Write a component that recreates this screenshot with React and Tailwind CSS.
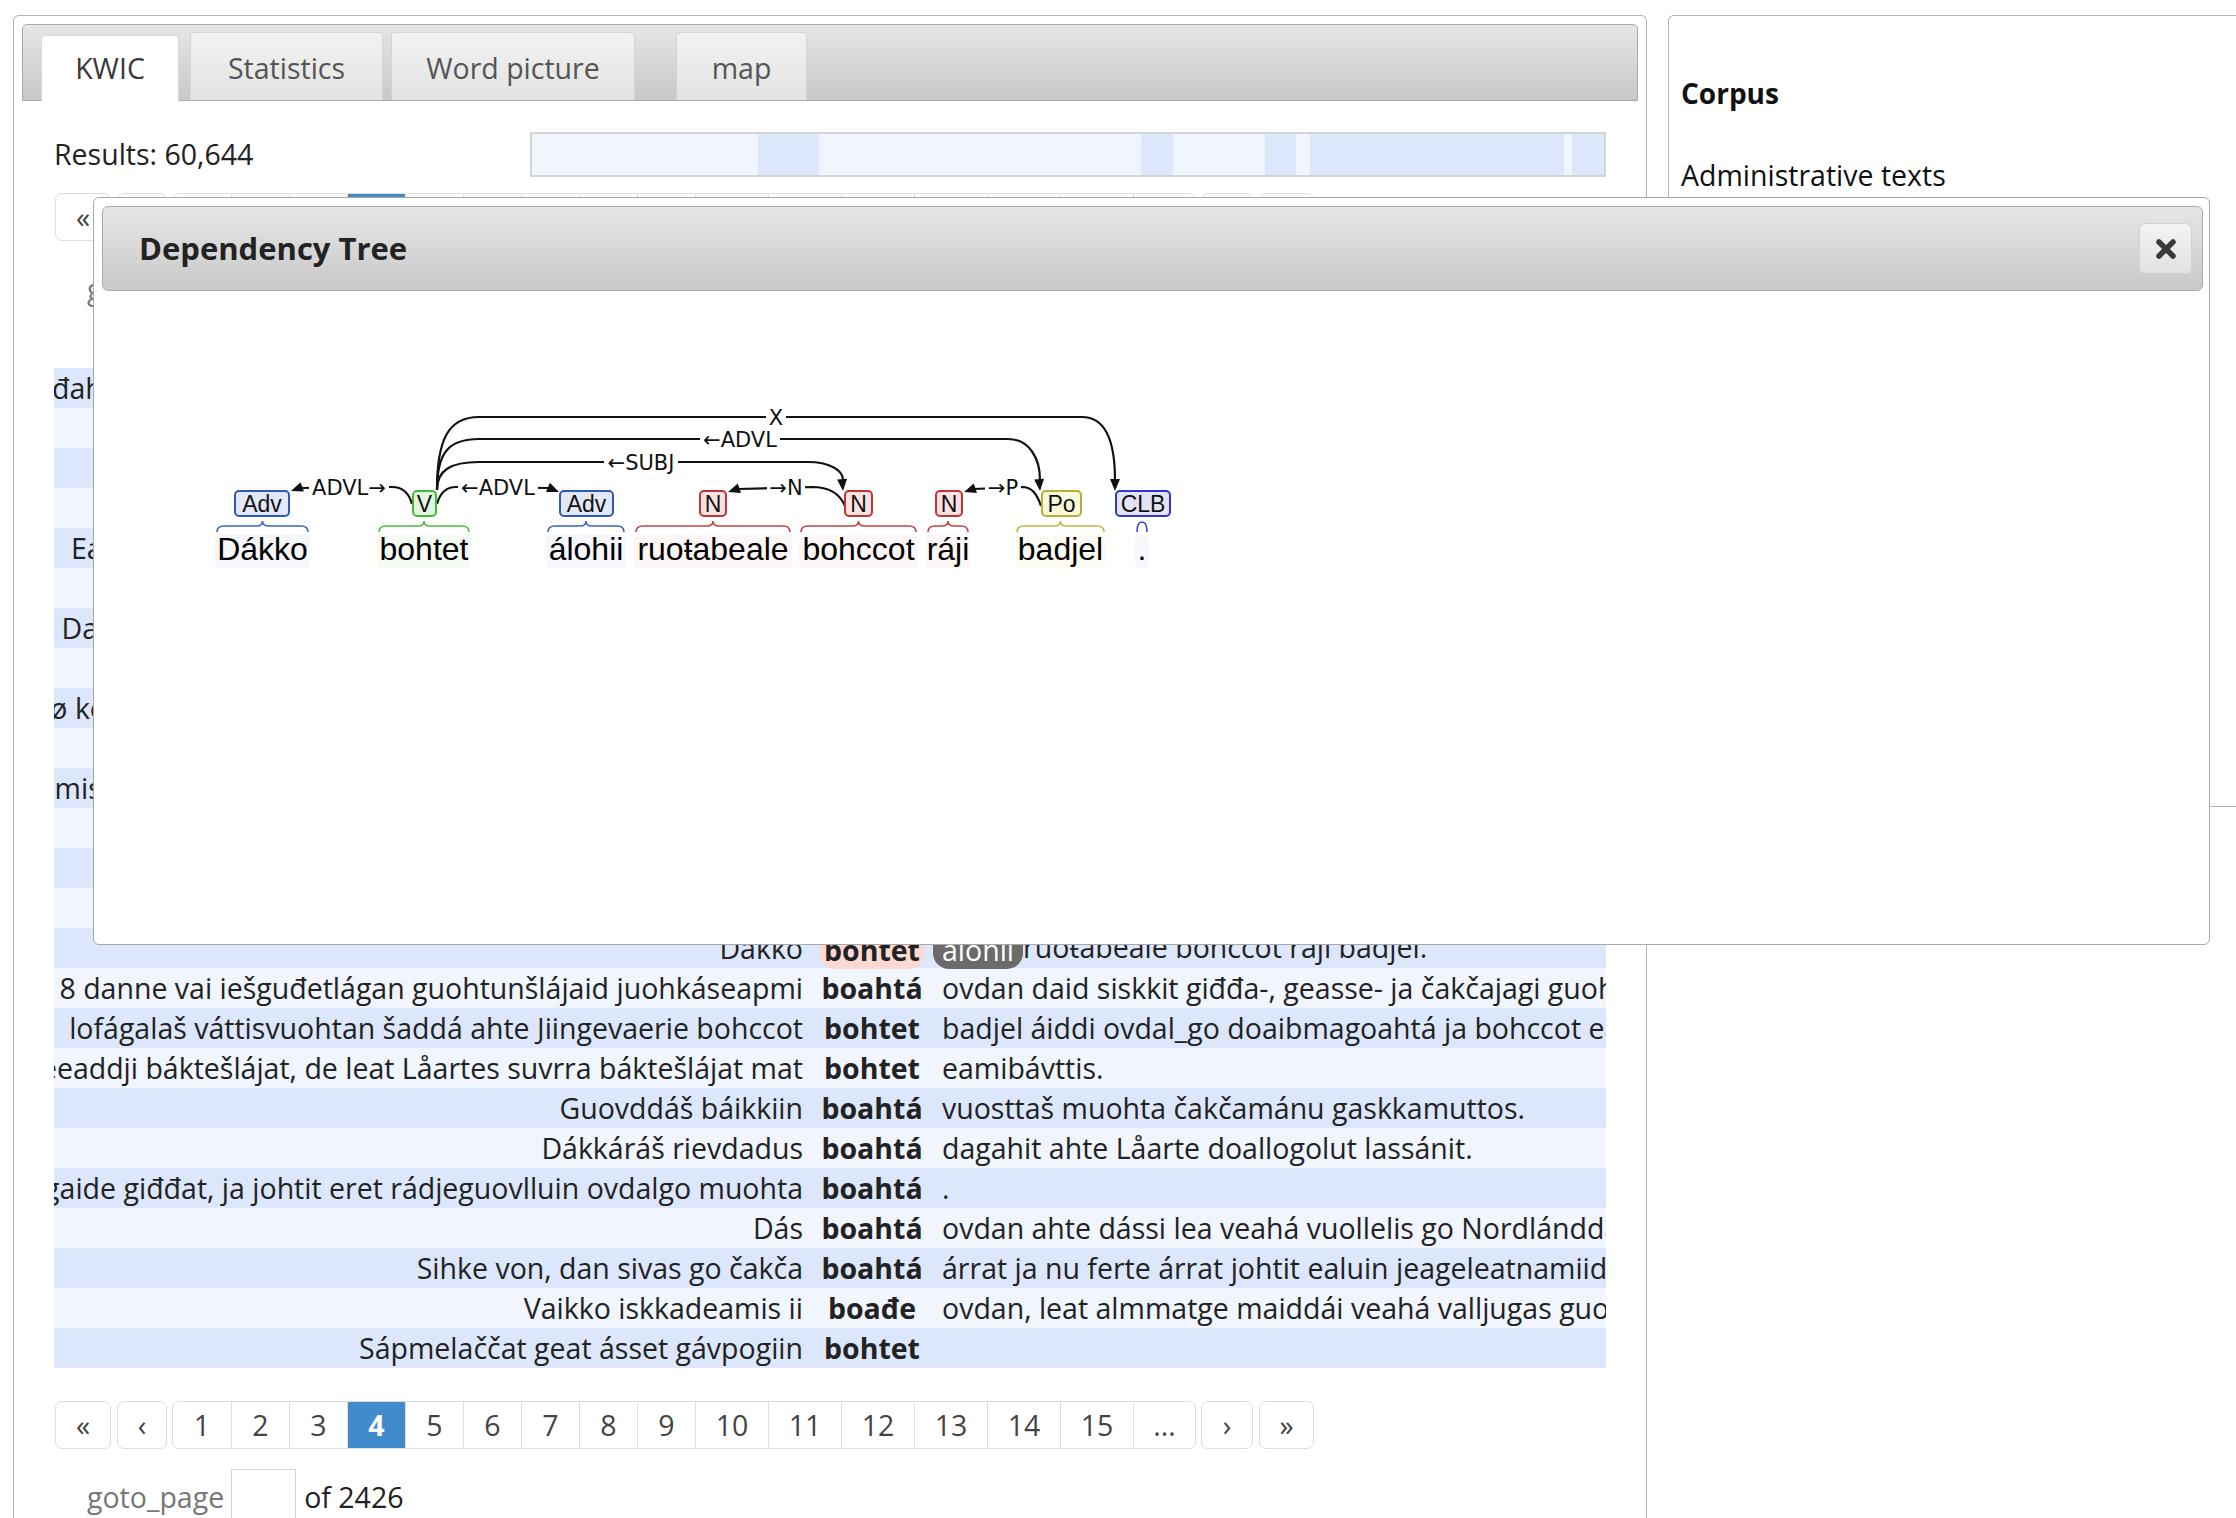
import React from "react";

const rows = [
  { left: "đahkan lea dat ahte eanaš bohccuid orrot várreguovlluin", match: "bohtet", right: "dalvet vuotnaguovlluide ja orrot doppe gitta giđđii." },
  { left: "Go", match: "boahtá", right: "giđđa, de bohccot johtet geassejohtolagaide." },
  { left: "Dalle", match: "bohtet", right: "eallit fas ruoktot." },
  { left: "Muhto čakčat", match: "boahtá", right: "muohta árrat ja guohtun šaddá heittot." },
  { left: "Eanaš bohccot leat dalvet guohtumiin dain guovlluin go", match: "bohtet", right: "ruoktot mearragáddái." },
  { left: "Jus", match: "boahtá", right: "bivvalis dálki, de goiká jiekŋa." },
  { left: "Dat mearkkaša ahte buot bohccot mat leat dan guovllus", match: "bohtet", right: "čoggojuvvot ovttas." },
  { left: "Maŋŋil", match: "boahtá", right: "rátkin." },
  { left: "ø kommuna lea stuorra boazodoallosuohkan, doppe leat", match: "bohtet", right: "eanemus bohccot." },
  { left: "Dasto", match: "boahtá", right: "merkema áigi." },
  { left: "mis leat dieđut das man ollu bohccot dávjá leat dain mat", match: "bohtet", right: "eará guovlluin." },
  { left: "Go geassi", match: "boahtá", right: "de bohccot vádjolit várriide." },
  { left: "Ođđa", match: "bohtet", right: "láhkaásahusat." },
  { left: "Dalle", match: "boahtá", right: "čakčageassi." },
  { left: "Dákko", match: "bohtet", right: null, special: true },
  { left: "2018 danne vai iešguđetlágan guohtunšlájaid juohkáseapmi", match: "boahtá", right: "ovdan daid siskkit giđđa-, geasse- ja čakčajagi guohtumiin." },
  { left: "lofágalaš váttisvuohtan šaddá ahte Jiingevaerie bohccot", match: "bohtet", right: "badjel áiddi ovdal_go doaibmagoahtá ja bohccot eai beasa ruoktot." },
  { left: "Dat lea vuolleeaddji báktešlájat, de leat Låartes suvrra báktešlájat mat", match: "bohtet", right: "eamibávttis." },
  { left: "Guovddáš báikkiin", match: "boahtá", right: "vuosttaš muohta čakčamánu gaskkamuttos." },
  { left: "Dákkáráš rievdadus", match: "boahtá", right: "dagahit ahte Låarte doallogolut lassánit." },
  { left: "Bohccot galget guođohit ja bálggaide giđđat, ja johtit eret rádjeguovlluin ovdalgo muohta", match: "boahtá", right: "." },
  { left: "Dás", match: "boahtá", right: "ovdan ahte dássi lea veahá vuollelis go Nordlánddas ja Romssas." },
  { left: "Sihke von, dan sivas go čakča", match: "boahtá", right: "árrat ja nu ferte árrat johtit ealuin jeageleatnamiidda." },
  { left: "Vaikko iskkadeamis ii", match: "boađe", right: "ovdan, leat almmatge maiddái veahá valljugas guohtumat." },
  { left: "Sápmelaččat geat ásset gávpogiin", match: "bohtet", right: "" },
];

const histogram = [
  [226, false], [61, true], [322, false], [32, true], [92, false],
  [31, true], [14, false], [254, true], [8, false], [32, true],
];

const pages = [
  { p: "1", w: "w-[58px]" }, { p: "2", w: "w-[58px]" }, { p: "3", w: "w-[58px]" },
  { p: "4", w: "w-[58px]", active: true }, { p: "5", w: "w-[58px]" }, { p: "6", w: "w-[58px]" },
  { p: "7", w: "w-[58px]" }, { p: "8", w: "w-[58px]" }, { p: "9", w: "w-[58px]" },
  { p: "10", w: "w-[73px]" }, { p: "11", w: "w-[73px]" }, { p: "12", w: "w-[73px]" },
  { p: "13", w: "w-[73px]" }, { p: "14", w: "w-[73px]" }, { p: "15", w: "w-[73px]" },
  { p: "...", w: "w-[62px]" },
];

const POS = {
  adv: { stroke: "#3058c0", fill: "#e1e8f8", brace: "#3d63c8", word: "#f5f7fd" },
  v: { stroke: "#45b83c", fill: "#e4f6df", brace: "#4fbb42", word: "#f5fbf3" },
  n: { stroke: "#bf3535", fill: "#fbe2e2", brace: "#c24444", word: "#fdf6f6" },
  po: { stroke: "#b2b23a", fill: "#fafadb", brace: "#b9b947", word: "#fcfcf2" },
  clb: { stroke: "#3636c6", fill: "#e3e3f8", brace: "#3a46c8", word: "#f6f6fd" },
};

const tokens = [
  { word: "Dákko", tag: "Adv", pos: "adv", bx: 234, bw: 56, wx: 217, ww: 91 },
  { word: "bohtet", tag: "V", pos: "v", bx: 412, bw: 25, wx: 379, ww: 90 },
  { word: "álohii", tag: "Adv", pos: "adv", bx: 559, bw: 55, wx: 548, ww: 76 },
  { word: "ruoŧabeale", tag: "N", pos: "n", bx: 699, bw: 28, wx: 636, ww: 154 },
  { word: "bohccot", tag: "N", pos: "n", bx: 844, bw: 29, wx: 801, ww: 115 },
  { word: "ráji", tag: "N", pos: "n", bx: 935, bw: 28, wx: 928, ww: 40 },
  { word: "badjel", tag: "Po", pos: "po", bx: 1041, bw: 41, wx: 1017, ww: 87 },
  { word: ".", tag: "CLB", pos: "clb", bx: 1115, bw: 56, wx: 1137, ww: 10 },
];

const arcs = [
  { d: "M437 490 C437 440 448 417 479 417 L1082 417 C1106 417 1115 442 1115 480", label: "X", lx: 776, ly: 417, lw: 20, tip: [1115, 491], from: [1115, 478] },
  { d: "M437 490 C437 452 449 439 479 439 L1008 439 C1029 439 1040 458 1040 480", label: "←ADVL", lx: 740, ly: 439, lw: 80, tip: [1040, 491], from: [1039, 478] },
  { d: "M437 490 C437 470 451 462 479 462 L808 462 C829 462 843 470 843 480", label: "←SUBJ", lx: 641, ly: 462, lw: 74, tip: [843, 491], from: [842, 478] },
  { d: "M412 504 C409 493 403 487 392 487 L300 488", label: "ADVL→", lx: 349, ly: 487, lw: 80, tip: [291, 491], from: [302, 487] },
  { d: "M437 504 C440 493 446 487 456 487 L549 488", label: "←ADVL", lx: 498, ly: 487, lw: 80, tip: [559, 492], from: [547, 487] },
  { d: "M845 506 C840 494 830 487 812 487 L738 489", label: "→N", lx: 786, ly: 487, lw: 38, tip: [728, 492], from: [740, 488] },
  { d: "M1041 506 C1037 494 1032 487 1022 487 L974 489", label: "→P", lx: 1003, ly: 487, lw: 36, tip: [964, 492], from: [976, 488] },
];

const arrowHead = ([tx, ty], [fx, fy]) => {
  const dx = tx - fx;
  const dy = ty - fy;
  const len = Math.hypot(dx, dy);
  const ux = dx / len;
  const uy = dy / len;
  const bx = tx - ux * 12;
  const by = ty - uy * 12;
  return `M${tx} ${ty} L${bx - uy * 5} ${by + ux * 5} L${bx + uy * 5} ${by - ux * 5} Z`;
};

const brace = (x1, x2) => {
  const c = (x1 + x2) / 2;
  if (x2 - x1 < 20) return `M${x1} 532 Q${x1} 522 ${c} 522 Q${x2} 522 ${x2} 532`;
  return `M${x1} 532 Q${x1} 526 ${x1 + 7} 526 L${c - 6} 526 Q${c} 526 ${c} 521 Q${c} 526 ${c + 6} 526 L${x2 - 7} 526 Q${x2} 526 ${x2} 532`;
};

const svgFont = "Liberation Sans, Arial, sans-serif";
const labelFont = "DejaVu Sans, sans-serif";

function DepTree() {
  return (
    <svg width="1000" height="180" viewBox="200 400 1000 180" className="block">
      {tokens.map((t) => (
        <rect key={t.word + "-bg"} x={t.wx - 2} y={535} width={t.ww + 4} height={33} rx={5} fill={POS[t.pos].word} />
      ))}
      {tokens.map((t) => (
        <path key={t.word + "-br"} d={brace(t.wx, t.wx + t.ww)} fill="none" stroke={POS[t.pos].brace} strokeWidth={1.6} />
      ))}
      {arcs.map((a, i) => (
        <g key={i}>
          <path d={a.d} fill="none" stroke="#111" strokeWidth={2.2} />
          <path d={arrowHead(a.tip, a.from)} fill="#111" />
        </g>
      ))}
      {arcs.map((a, i) => (
        <g key={"l" + i}>
          <rect x={a.lx - a.lw / 2} y={a.ly - 10} width={a.lw} height={20} fill="#fff" />
          <text x={a.lx} y={a.ly + 7.5} textAnchor="middle" fontSize={21} fontFamily={labelFont} fill="#111">
            {a.label}
          </text>
        </g>
      ))}
      {tokens.map((t) => (
        <g key={t.word + "-box"}>
          <rect x={t.bx + 1} y={491} width={t.bw - 2} height={25} rx={4} fill={POS[t.pos].fill} stroke={POS[t.pos].stroke} strokeWidth={2} />
          <text x={t.bx + t.bw / 2} y={512} textAnchor="middle" fontSize={23} fontFamily={svgFont} fill="#111">
            {t.tag}
          </text>
          <text x={t.wx + t.ww / 2} y={560} textAnchor="middle" fontSize={32} fontFamily={svgFont} fill="#000">
            {t.word}
          </text>
        </g>
      ))}
    </svg>
  );
}

function Pager({ className = "" }) {
  return (
    <div className={`flex h-[48px] text-[#444] ${className}`}>
      <div className="ml-[1px] w-[56px] flex items-center justify-center border border-[#ddd] rounded-[7px]">«</div>
      <div className="ml-[6px] w-[50px] flex items-center justify-center border border-[#ddd] rounded-[7px]">‹</div>
      <div className="ml-[5px] flex border border-[#ddd] rounded-[7px] overflow-hidden">
        {pages.map((pg, i) => (
          <div
            key={pg.p}
            className={`${pg.w} flex items-center justify-center ${i > 0 ? "border-l border-[#ddd]" : ""} ${
              pg.active ? "bg-[#428bca] text-white font-bold border-[#428bca]" : ""
            }`}
          >
            {pg.p}
          </div>
        ))}
      </div>
      <div className="ml-[5px] w-[52px] flex items-center justify-center border border-[#ddd] rounded-[7px]">›</div>
      <div className="ml-[6px] w-[55px] flex items-center justify-center border border-[#ddd] rounded-[7px]">»</div>
    </div>
  );
}

function Goto() {
  return (
    <div className="mt-[20px] h-[56px] flex items-center pl-[33px]">
      <span className="text-[#777]">goto_page</span>
      <div className="ml-[7px] w-[65px] h-[56px] border border-[#d6d6d6] bg-white" />
      <span className="ml-[8px] text-[#222]">of 2426</span>
    </div>
  );
}

function KwicRow({ row, index }) {
  const dark = index % 2 === 0;
  return (
    <div className={`flex h-[40px] items-center leading-[40px] ${dark ? "bg-[#dce7fb]" : "bg-[#f0f5fe]"}`}>
      <div className="w-[758px] shrink-0 flex justify-end overflow-hidden whitespace-nowrap pr-[9px]">
        <span className="shrink-0">{row.left}</span>
      </div>
      <div className="w-[120px] shrink-0 text-center font-bold whitespace-nowrap">
        {row.special ? (
          <span className="inline-block h-[38px] leading-[38px] px-[4px] rounded-[14px] bg-[#fcdad3] align-middle">
            {row.match}
          </span>
        ) : (
          row.match
        )}
      </div>
      <div className="flex-1 overflow-hidden whitespace-nowrap pl-[10px]">
        {row.special ? (
          <>
            <span className="inline-block -ml-[9px] px-[9px] h-[38px] leading-[38px] rounded-[16px] bg-[#6b6b6b] text-white align-middle">
              álohii
            </span>
            ruoŧabeale bohccot ráji badjel.
          </>
        ) : (
          row.right
        )}
      </div>
    </div>
  );
}

export default function App() {
  return (
    <div className="relative w-[2236px] h-[1518px] overflow-hidden bg-white text-[#222] text-[28.5px] font-['Open_Sans',sans-serif]">
      <div className="flex items-start pt-[15px] pl-[13px]">
        {/* Main results panel */}
        <div className="w-[1634px] h-[1600px] shrink-0 border border-b-0 border-[#b4b4b4] rounded-t-[6px] p-[8px]">
          {/* Tabs */}
          <div className="h-[77px] flex items-end pl-[18px] border border-[#aaa] rounded-t-[5px] bg-linear-to-b from-[#e6e6e6] to-[#c8c8c8]">
            <div className="w-[138px] h-[66px] -mb-[1px] flex items-center justify-center bg-white border border-b-0 border-[#d8d8d8] rounded-t-[4px] text-[#3a3a3a]">
              KWIC
            </div>
            <div className="ml-[11px] w-[193px] h-[68px] pt-[3px] flex items-center justify-center border border-b-0 border-[#d3d3d3] rounded-t-[4px] bg-linear-to-b from-[#f2f2f2] to-[#e3e3e3] text-[#555]">
              Statistics
            </div>
            <div className="ml-[8px] w-[244px] h-[68px] pt-[3px] flex items-center justify-center border border-b-0 border-[#d3d3d3] rounded-t-[4px] bg-linear-to-b from-[#f2f2f2] to-[#e3e3e3] text-[#555]">
              Word picture
            </div>
            <div className="ml-[41px] w-[131px] h-[68px] pt-[3px] flex items-center justify-center border border-b-0 border-[#d3d3d3] rounded-t-[4px] bg-linear-to-b from-[#f2f2f2] to-[#e3e3e3] text-[#555]">
              map
            </div>
          </div>

          <div className="px-[32px]">
            {/* Results + histogram */}
            <div className="mt-[31px] h-[45px] flex items-center">
              <span>Results: 60,644</span>
              <div className="ml-auto w-[1076px] h-[45px] flex border-2 border-[#d4d4d4] bg-[#f1f6fe]">
                {histogram.map(([w, hit], i) => (
                  <div key={i} className={hit ? "bg-[#dce7fb]" : "bg-[#f1f6fe]"} style={{ width: w }} />
                ))}
              </div>
            </div>

            <Pager className="mt-[16px]" />
            <Goto />

            {/* KWIC table */}
            <div className="mt-[51px]">
              {rows.map((row, i) => (
                <KwicRow key={i} row={row} index={i} />
              ))}
            </div>

            <Pager className="mt-[33px]" />
            <Goto />
          </div>
        </div>

        {/* Sidebar */}
        <div className="ml-[21px] w-[600px] h-[792px] shrink-0 border border-r-0 border-[#b4b4b4] rounded-tl-[6px] pl-[12px] pt-[57px]">
          <div className="h-[40px] leading-[40px] font-bold text-[#111] text-[28px]">Corpus</div>
          <div className="mt-[42px] h-[40px] leading-[40px] text-[#111]">Administrative texts</div>
        </div>
      </div>

      {/* Dependency tree dialog */}
      <div className="absolute left-[93px] top-[197px] w-[2117px] h-[748px] bg-white border border-[#a8a8a8] rounded-[6px] pl-[8px] pr-[6px] pt-[8px]">
        <div className="h-[85px] flex items-center justify-between pl-[36px] pr-[10px] border border-[#aaa] rounded-[6px] bg-linear-to-b from-[#e6e6e6] to-[#c9c9c9]">
          <span className="text-[31px] font-bold text-[#222]">Dependency Tree</span>
          <button className="w-[53px] h-[51px] flex items-center justify-center rounded-[6px] border border-[#d2d2d2] bg-linear-to-b from-[#f3f3f3] to-[#e2e2e2]">
            <svg width="22" height="22" viewBox="0 0 22 22">
              <path d="M4 4 L18 18 M18 4 L4 18" stroke="#3a3a3a" strokeWidth="5.5" strokeLinecap="round" />
            </svg>
          </button>
        </div>
        <div className="mt-[109px] ml-[98px]">
          <DepTree />
        </div>
      </div>
    </div>
  );
}
